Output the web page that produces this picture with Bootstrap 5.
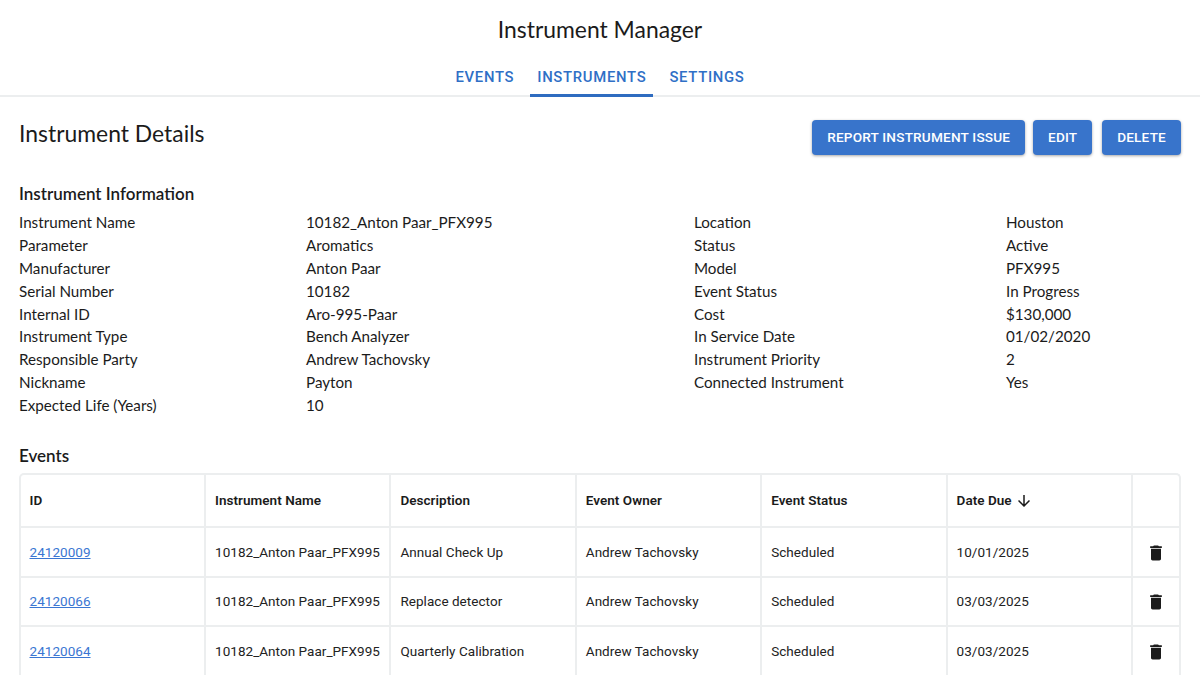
<!DOCTYPE html>
<html lang="en">
<head>
<meta charset="utf-8">
<title>Instrument Manager</title>
<link rel="stylesheet" href="https://cdn.jsdelivr.net/npm/bootstrap@5.3.0/dist/css/bootstrap.min.css">
<style>
html,body{height:675px;overflow:hidden;background:#fff}
body{font-family:"Lato","Liberation Sans",sans-serif;color:#1b1b1b;font-variant-ligatures:common-ligatures}
.app-title{font-size:22.9px;line-height:30px;padding-top:14px;margin:0;font-weight:400;text-align:center}
.tabbar{height:53px;border-bottom:2px solid #eceeef;padding-top:13px}
.tabbar .nav-link{font-family:Roboto,sans-serif;font-weight:500;font-size:14.85px;letter-spacing:.7px;color:#2f6fc6;padding:0 7px;height:40px;line-height:40px;margin:0 4.5px;border-bottom:3px solid transparent}
.tabbar .nav-link.active{border-bottom-color:#2f6cc0;border-radius:0}
.content-area{padding:0 19px}
.page-head{height:84px;padding-top:23px}
.page-title{font-size:22.9px;line-height:27px;margin:0;font-weight:400}
.act-btn{font-family:Roboto,sans-serif;font-weight:500;font-size:13.6px;letter-spacing:.2px;height:35px;background:#3874cb;border:0;color:#fff;padding:0 15px;border-radius:4px;box-shadow:0 1px 3px rgba(0,0,0,.35)}
.act-btn-narrow{padding:0 14.8px;margin-right:2px}
.sec-title{font-size:17px;line-height:26px;font-weight:600;margin:0}
.info-grid{margin-top:4.1px;font-size:15.2px;line-height:22.86px;display:grid;grid-template-columns:287px 388px 312px 1fr}
.events-title{margin-top:26px;margin-bottom:4px}
.ev-wrap{border:2px solid #eceeef;border-bottom:0;border-radius:5px 5px 0 0;height:220px;overflow:hidden}
.ev-table{font-family:Roboto,sans-serif;font-size:13.5px;letter-spacing:.04px;table-layout:fixed;width:100%;margin:0;color:#222}
.ev-table th,.ev-table td{padding:0 0 0 9px;vertical-align:middle;border-right:2px solid #eceeef;border-bottom:2px solid #eceeef;white-space:nowrap;overflow:hidden}
.ev-table th:first-child,.ev-table td:first-child{padding-left:8.5px}
.ev-table th:last-child,.ev-table td:last-child{border-right:0;padding:0;text-align:center}
.ev-table th{font-weight:600;height:52px;padding-bottom:1px;color:#1b1b1b}
.ev-table td{height:50px}
.ev-table tbody tr:nth-child(2) td{height:49px}
.ev-table a{color:#3a76d2}
.ev-table svg{display:inline-block;vertical-align:middle}
</style>
</head>
<body>
<h1 class="app-title">Instrument Manager</h1>
<ul class="nav justify-content-center tabbar">
  <li class="nav-item"><a class="nav-link" href="#">EVENTS</a></li>
  <li class="nav-item"><a class="nav-link active" href="#">INSTRUMENTS</a></li>
  <li class="nav-item"><a class="nav-link" href="#">SETTINGS</a></li>
</ul>
<main class="content-area">
  <div class="d-flex justify-content-between align-items-start page-head">
    <h2 class="page-title">Instrument Details</h2>
    <div class="d-flex gap-2">
      <button class="btn act-btn" type="button">REPORT INSTRUMENT ISSUE</button>
      <button class="btn act-btn act-btn-narrow" type="button">EDIT</button>
      <button class="btn act-btn" type="button">DELETE</button>
    </div>
  </div>
  <h3 class="sec-title">Instrument Information</h3>
  <div class="info-grid">
    <div>Instrument Name</div><div>10182_Anton Paar_PFX995</div><div>Location</div><div>Houston</div>
    <div>Parameter</div><div>Aromatics</div><div>Status</div><div>Active</div>
    <div>Manufacturer</div><div>Anton Paar</div><div>Model</div><div>PFX995</div>
    <div>Serial Number</div><div>10182</div><div>Event Status</div><div>In Progress</div>
    <div>Internal ID</div><div>Aro-995-Paar</div><div>Cost</div><div>$130,000</div>
    <div>Instrument Type</div><div>Bench Analyzer</div><div>In Service Date</div><div>01/02/2020</div>
    <div>Responsible Party</div><div>Andrew Tachovsky</div><div>Instrument Priority</div><div>2</div>
    <div>Nickname</div><div>Payton</div><div>Connected Instrument</div><div>Yes</div>
    <div>Expected Life (Years)</div><div>10</div><div></div><div></div>
  </div>
  <h3 class="sec-title events-title">Events</h3>
  <div class="ev-wrap">
    <table class="table ev-table">
      <colgroup><col style="width:184px"><col style="width:185.4px"><col style="width:185.4px"><col style="width:185.4px"><col style="width:185.4px"><col style="width:185.4px"><col></colgroup>
      <thead><tr><th>ID</th><th>Instrument Name</th><th>Description</th><th>Event Owner</th><th>Event Status</th><th>Date Due <svg width="18" height="18" viewBox="0 0 24 24" fill="currentColor"><path d="M20 12l-1.41-1.41L13 16.17V4h-2v12.17l-5.58-5.59L4 12l8 8 8-8z"/></svg></th><th></th></tr></thead>
      <tbody>
        <tr><td><a href="#">24120009</a></td><td>10182_Anton Paar_PFX995</td><td>Annual Check Up</td><td>Andrew Tachovsky</td><td>Scheduled</td><td>10/01/2025</td><td><svg width="20" height="20" viewBox="0 0 24 24" fill="#1b1b1b"><path d="M6 19c0 1.1.9 2 2 2h8c1.1 0 2-.9 2-2V7H6v12zM19 4h-3.5l-1-1h-5l-1 1H5v2h14V4z"/></svg></td></tr>
        <tr><td><a href="#">24120066</a></td><td>10182_Anton Paar_PFX995</td><td>Replace detector</td><td>Andrew Tachovsky</td><td>Scheduled</td><td>03/03/2025</td><td><svg width="20" height="20" viewBox="0 0 24 24" fill="#1b1b1b"><path d="M6 19c0 1.1.9 2 2 2h8c1.1 0 2-.9 2-2V7H6v12zM19 4h-3.5l-1-1h-5l-1 1H5v2h14V4z"/></svg></td></tr>
        <tr><td><a href="#">24120064</a></td><td>10182_Anton Paar_PFX995</td><td>Quarterly Calibration</td><td>Andrew Tachovsky</td><td>Scheduled</td><td>03/03/2025</td><td><svg width="20" height="20" viewBox="0 0 24 24" fill="#1b1b1b"><path d="M6 19c0 1.1.9 2 2 2h8c1.1 0 2-.9 2-2V7H6v12zM19 4h-3.5l-1-1h-5l-1 1H5v2h14V4z"/></svg></td></tr>
      </tbody>
    </table>
  </div>
</main>
<script src="https://cdn.jsdelivr.net/npm/bootstrap@5.3.0/dist/js/bootstrap.bundle.min.js"></script>
</body>
</html>
